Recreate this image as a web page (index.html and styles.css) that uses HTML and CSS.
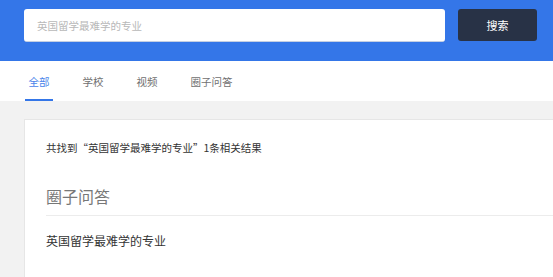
FILE: index.html
```html
<!DOCTYPE html>
<html lang="zh-CN">
<head>
<meta charset="utf-8">
<title>搜索结果</title>
<link rel="stylesheet" href="styles.css">
</head>
<body>
<header class="header">
  <div class="search-box">英国留学最难学的专业</div>
  <button class="search-btn">搜索</button>
</header>
<nav class="tabs">
  <span class="tab active">全部</span>
  <span class="tab">学校</span>
  <span class="tab">视频</span>
  <span class="tab">圈子问答</span>
</nav>
<main class="content">
  <section class="card">
    <p class="summary">共找到“英国留学最难学的专业”1条相关结果</p>
    <h2 class="section-title">圈子问答</h2>
    <p class="result-item">英国留学最难学的专业</p>
  </section>
</main>
</body>
</html>
```
FILE: styles.css
```css
html, body {
  margin: 0;
  padding: 0;
}
body {
  width: 553px;
  height: 277px;
  overflow: hidden;
  background: #f2f2f2;
  font-family: "Noto Sans CJK SC", "Noto Sans", sans-serif;
}
.header {
  height: 61px;
  box-sizing: border-box;
  background: #3476e8;
  display: flex;
  align-items: flex-start;
  padding: 9px 0 0 24px;
  gap: 13px;
}
.search-box {
  width: 421px;
  height: 33px;
  box-sizing: border-box;
  background: #fff;
  border-radius: 3px;
  border-bottom: 1px solid #c4cfe2;
  padding-left: 13px;
  font-size: 10.5px;
  line-height: 33px;
  color: #b8b8b8;
}
.search-btn {
  width: 79px;
  height: 32px;
  border: none;
  border-radius: 3px;
  background: #283246;
  color: #fff;
  font-family: inherit;
  font-size: 11px;
  padding: 0;
}
.tabs {
  height: 40px;
  box-sizing: border-box;
  background: #fff;
  display: flex;
  padding-left: 25px;
  gap: 26px;
}
.tab {
  padding: 13px 3.5px 10px;
  line-height: 15px;
  font-size: 10.5px;
  color: #707070;
  border-bottom: 2px solid transparent;
}
.tab.active {
  color: #4a83ea;
  border-bottom-color: #3476e8;
}
.content {
  padding: 18px 0 0 24px;
}
.card {
  box-sizing: border-box;
  height: 158px;
  background: #fff;
  border-left: 1px solid #e6e6e6;
  border-top: 1px solid #e6e6e6;
  padding: 20px 0 0 21px;
}
.summary {
  margin: 0;
  font-size: 10.5px;
  line-height: 16px;
  color: #333;
}
.section-title {
  margin: 29px 0 0;
  padding-bottom: 8px;
  border-bottom: 1px solid #ececec;
  font-size: 16px;
  line-height: 22px;
  font-weight: normal;
  color: #777;
}
.result-item {
  margin: 16px 0 0;
  font-size: 12px;
  line-height: 18px;
  color: #333;
}
```
